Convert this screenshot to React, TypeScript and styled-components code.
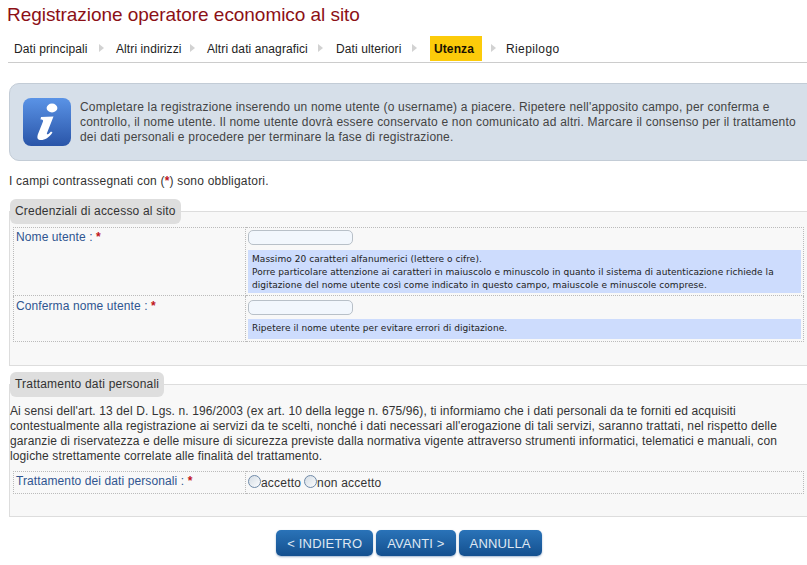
import React from 'react';
import styled, { createGlobalStyle } from 'styled-components';

const GlobalStyle = createGlobalStyle`
	html, body {
		margin: 0;
		padding: 0;
		background: #fff;
		overflow: hidden;
	}
	body {
		font-family: 'Liberation Sans', Arial, sans-serif;
		font-size: 12px;
		letter-spacing: 0.2px;
		color: #333;
	}
`;

const Page = styled.div`
	width: 830px;
	height: 565px;
	padding-left: 7px;
	box-sizing: border-box;
`;

const Title = styled.h1`
	margin: 0;
	padding-top: 2px;
	height: 36px;
	box-sizing: border-box;
	font-size: 19px;
	line-height: 25px;
	letter-spacing: -0.05px;
	font-weight: normal;
	color: #8c1016;
`;

const Steps = styled.ul`
	display: flex;
	align-items: center;
	list-style: none;
	margin: 0 0 20px 1px;
	padding: 0;
	height: 26px;
	border-bottom: 1px solid #ccc;
	font-size: 12px;
	letter-spacing: 0.1px;
	color: #222;
`;

const Step = styled.li<{ $width?: number; $shift?: number; $loose?: boolean }>`
	flex: none;
	width: ${(p) => (p.$width ? `${p.$width}px` : 'auto')};
	margin-left: ${(p) => p.$shift ?? 0}px;
	padding: 0 6px;
	white-space: nowrap;
	letter-spacing: ${(p) => (p.$loose ? '0.4px' : 'inherit')};
`;

const ActiveStep = styled.li`
	display: flex;
	align-items: center;
	flex: none;
	height: 25px;
	margin: -1px 5px 0 7px;
	padding: 0 8px 0 4px;
	background: #fccb0a;
	font-weight: bold;
	color: #1a1200;
`;

const Arrow = styled.li`
	flex: none;
	width: 0;
	height: 0;
	margin: -2px 6px 0 4px;
	border-style: solid;
	border-width: 4px 0 4px 5px;
	border-color: transparent transparent transparent #d2d2d2;
`;

const InfoBox = styled.div`
	display: flex;
	align-items: center;
	gap: 9px;
	height: 78px;
	box-sizing: border-box;
	margin: 0 0 13px 2px;
	padding: 0 0 0 13px;
	background: #d6dfe9;
	border: 1px solid #c3ccd6;
	border-radius: 10px;
`;

const InfoText = styled.p`
	margin: 0;
	width: 725px;
	line-height: 15px;
	color: #444;
`;

const Note = styled.p`
	margin: 0 0 10px 2px;
	line-height: 15px;
	color: #333;
`;

const Required = styled.span`
	color: #c0141c;
	font-weight: bold;
`;

const Section = styled.fieldset<{ $height: number }>`
	height: ${(p) => p.$height}px;
	margin: 0 0 6px 2px;
	padding: 0 0 0 3px;
	border: 0;
	border-top: 1px solid #ddd;
	border-bottom: 1px solid #ddd;
	border-left: 1px solid #ddd;
	background: #f8f8f8;
	min-width: 0;
`;

const SectionTitle = styled.legend`
	height: 25px;
	margin-left: -3px;
	padding: 0 5px;
	box-sizing: border-box;
	line-height: 25px;
	background: #dedede;
	border-radius: 6px;
	color: #333;
`;

const FormTable = styled.table`
	border-collapse: collapse;
	width: 791px;
	margin-top: 3px;
	table-layout: fixed;
`;

const Label = styled.td<{ $second?: boolean }>`
	width: 227px;
	padding: ${(p) => (p.$second ? '3px' : '2px')} 2px 0;
	vertical-align: top;
	border: 1px dotted #bbb;
	line-height: 15px;
	letter-spacing: 0.1px;
	color: #2f5590;
`;

const Field = styled.td`
	padding: 2px;
	vertical-align: top;
	border: 1px dotted #bbb;
`;

const TextInput = styled.input<{ $second?: boolean }>`
	display: block;
	width: 105px;
	height: 15px;
	box-sizing: border-box;
	margin: ${(p) => (p.$second ? '2px 0 4px' : '0 0 5px')};
	padding: 0 4px;
	border: 1px solid #b8c0c8;
	border-radius: 5px;
	background: #f2f7fd;
`;

const Hint = styled.div`
	min-height: 20px;
	box-sizing: border-box;
	padding: 3px 4px 1px;
	background: #cddcfd;
	font-family: 'DejaVu Sans', Verdana, sans-serif;
	font-size: 9px;
	line-height: 13px;
	letter-spacing: 0.05px;
	color: #222;
`;

const Privacy = styled.p`
	margin: 7px 0 7px -3px;
	line-height: 15px;
	letter-spacing: 0.12px;
	white-space: nowrap;
	color: #333;
`;

const RadioRow = styled.div`
	display: flex;
	align-items: center;
	height: 17px;
	color: #333;
`;

const RadioOption = styled.label`
	display: flex;
	align-items: center;
	margin-right: 3px;
`;

const RadioDot = styled.span`
	display: block;
	width: 13px;
	height: 13px;
	margin-top: -3px;
	box-sizing: border-box;
	border: 1px solid #6f8aa8;
	border-radius: 50%;
	background: linear-gradient(135deg, #d4dce4, #fbfcfd);
`;

const Buttons = styled.div`
	display: flex;
	justify-content: center;
	gap: 3px;
	margin: 13px 0 0 -1px;
	width: 806px;
`;

const Button = styled.button`
	height: 26px;
	padding: 0 11px;
	border: 0;
	border-radius: 5px;
	background: linear-gradient(#2a73b8, #14508f);
	box-shadow: 0 1px 2px rgba(70, 110, 160, 0.5);
	font-family: 'Liberation Sans', Arial, sans-serif;
	font-size: 13px;
	letter-spacing: 0.15px;
	color: #dfe8f2;
`;

const InfoIcon = () => (
	<svg width='48' height='48' viewBox='0 0 48 48' style={{ flex: 'none' }}>
		<defs>
			<linearGradient id='infoBlue' x1='0' y1='0' x2='0' y2='1'>
				<stop offset='0' stopColor='#5a93e6' />
				<stop offset='1' stopColor='#2a55a8' />
			</linearGradient>
		</defs>
		<rect width='48' height='48' rx='8' fill='url(#infoBlue)' />
		<ellipse cx='29' cy='10' rx='5.4' ry='4.4' fill='#fff' />
		<path
			d='M18 19 L30.5 18.5 L24 35 C23.5 37 25 37 28 33.5 L29.5 34.5 C26 40 21 42.5 17 42 C14 41.5 14 39 15 36 L20 23.5 C20.5 22 19.5 21.5 17.5 21.5 Z'
			fill='#fff'
		/>
	</svg>
);

const App: React.FC = () => {
	return (
		<Page>
			<GlobalStyle />
			<Title>Registrazione operatore economico al sito</Title>
			<Steps>
				<Step $width={75}>Dati principali</Step>
				<Arrow />
				<Step $width={64}>Altri indirizzi</Step>
				<Arrow />
				<Step $width={101}>Altri dati anagrafici</Step>
				<Arrow />
				<Step $width={66} $shift={1}>
					Dati ulteriori
				</Step>
				<Arrow />
				<ActiveStep>Utenza</ActiveStep>
				<Arrow />
				<Step $shift={-2} $loose>
					Riepilogo
				</Step>
			</Steps>
			<InfoBox>
				<InfoIcon />
				<InfoText>
					Completare la registrazione inserendo un nome utente (o username) a piacere. Ripetere nell'apposito campo, per
					conferma e controllo, il nome utente. Il nome utente dovrà essere conservato e non comunicato ad altri. Marcare
					il consenso per il trattamento dei dati personali e procedere per terminare la fase di registrazione.
				</InfoText>
			</InfoBox>
			<Note>
				I campi contrassegnati con (<Required>*</Required>) sono obbligatori.
			</Note>
			<Section $height={165}>
				<SectionTitle>Credenziali di accesso al sito</SectionTitle>
				<FormTable>
					<tbody>
						<tr>
							<Label>
								Nome utente : <Required>*</Required>
							</Label>
							<Field>
								<TextInput type='text' />
								<Hint>
									Massimo 20 caratteri alfanumerici (lettere o cifre).
									<br />
									Porre particolare attenzione ai caratteri in maiuscolo e minuscolo in quanto il sistema di autenticazione
									richiede la digitazione del nome utente così come indicato in questo campo, maiuscole e minuscole comprese.
								</Hint>
							</Field>
						</tr>
						<tr>
							<Label $second>
								Conferma nome utente : <Required>*</Required>
							</Label>
							<Field>
								<TextInput type='text' $second />
								<Hint>Ripetere il nome utente per evitare errori di digitazione.</Hint>
							</Field>
						</tr>
					</tbody>
				</FormTable>
			</Section>
			<Section $height={143}>
				<SectionTitle>Trattamento dati personali</SectionTitle>
				<Privacy>
					Ai sensi dell'art. 13 del D. Lgs. n. 196/2003 (ex art. 10 della legge n. 675/96), ti informiamo che i dati personali da te forniti ed acquisiti
					<br />
					contestualmente alla registrazione ai servizi da te scelti, nonché i dati necessari all'erogazione di tali servizi, saranno trattati, nel rispetto delle
					<br />
					garanzie di riservatezza e delle misure di sicurezza previste dalla normativa vigente attraverso strumenti informatici, telematici e manuali, con
					<br />
					logiche strettamente correlate alle finalità del trattamento.
				</Privacy>
				<FormTable>
					<tbody>
						<tr>
							<Label>
								Trattamento dei dati personali : <Required>*</Required>
							</Label>
							<Field>
								<RadioRow>
									<RadioOption>
										<RadioDot />
										accetto
									</RadioOption>
									<RadioOption>
										<RadioDot />
										non accetto
									</RadioOption>
								</RadioRow>
							</Field>
						</tr>
					</tbody>
				</FormTable>
			</Section>
			<Buttons>
				<Button>&lt; INDIETRO</Button>
				<Button>AVANTI &gt;</Button>
				<Button>ANNULLA</Button>
			</Buttons>
		</Page>
	);
};

export default App;
